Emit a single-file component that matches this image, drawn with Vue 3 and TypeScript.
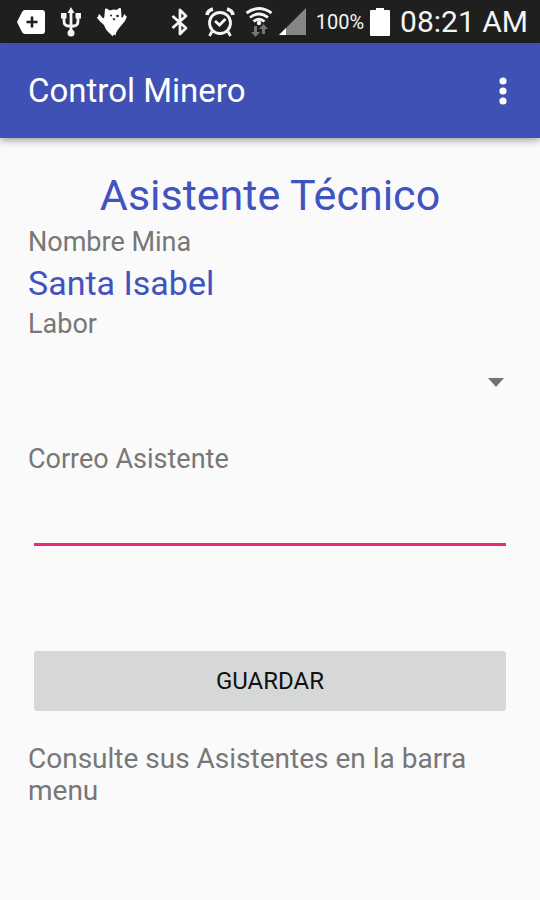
<script setup lang="ts">
import { ref } from 'vue'

const labor = ref('')
const correo = ref('')
const labores: string[] = []
</script>

<template>
  <div class="screen">
    <div class="status">
      <div class="notices">
        <svg width="28" height="26" viewBox="0 0 28 26" aria-hidden="true">
          <path d="M8 1h17q3 0 3 3v18q0 3-3 3H8q-2 0-3-2L0 13l5-10q1-2 3-2z" fill="#fff" />
          <path d="M15 7.500v11M9.500 13h11" stroke="#1f1f1f" stroke-width="2.600" />
        </svg>
        <svg width="20" height="30" viewBox="0 0 20 30" fill="none" stroke="#f4f4f4" stroke-width="2.800" aria-hidden="true">
          <path d="M10 5v20M3 10v4q0 4.500 4 5h6q4-.5 4-5v-4" />
          <path d="M10 0l3.500 6h-7z" fill="#f4f4f4" stroke="none" />
          <path d="M0 6h5.500v5.500H0zM14.500 6H20v5.500h-5.500z" fill="#f4f4f4" stroke="none" />
          <circle cx="10" cy="26" r="3.500" fill="#f4f4f4" stroke="none" />
        </svg>
        <svg width="30" height="30" viewBox="0 0 30 30" aria-hidden="true">
          <path d="M8 2.500Q8 1 9.500 1.500L13 3.500q4-1.500 6.500-.5L22.500 1q1.500-.5 1.500 1l.5 8q0 1.500 1.500 0l1-2.500q1-1 1 .5l1 1q1 0 .5 1.500l-1.500 3.500-5 6q-3 3.500-4 6l-.5 2.500-2-1-1 2-2-2.500Q9 24 7 18l-4-3.500-2.500-3Q-.5 10 1 9.800L1.500 8q.5-1.500 1.500-.3l2.500 3q1.500 1 1.800-.7z" fill="#fff" />
          <circle cx="14" cy="8.500" r="1" fill="#1f1f1f" />
          <circle cx="20.500" cy="9" r="1.300" fill="#1f1f1f" />
          <path d="M15.500 11l3 .5-1.500 2.500z" fill="#1f1f1f" />
        </svg>
      </div>
      <div class="system">
        <svg class="bluetooth" width="18" height="28" viewBox="0 0 18 28" fill="none" stroke="#f4f4f4" stroke-width="2.800" stroke-linejoin="round" aria-hidden="true">
          <path d="M1.500 8L15 20l-6 6V2l6 6L1.500 20" />
        </svg>
        <svg width="30" height="30" viewBox="0 0 30 30" fill="none" stroke="#f4f4f4" stroke-width="2.800" aria-hidden="true">
          <circle cx="15" cy="16" r="10.500" />
          <path d="M2 8q.5-4.500 6-6M28 8q-.5-4.500-6-6" stroke-width="3.600" />
          <path d="M10 14l4.500 4 6-6M7 24.500l-2.500 4.500M23 24.500l2.500 4.500" />
        </svg>
        <div class="network">
          <svg width="28" height="30" viewBox="0 0 28 30" fill="none" stroke="#f4f4f4" stroke-width="2.800" aria-hidden="true">
            <path d="M1.500 6q12.500-9 25 0M5 10.500q9-7 18 0M8.500 14.500q5.500-4.500 11 0" />
            <circle cx="14" cy="16" r="2.200" fill="#f4f4f4" stroke="none" />
            <path d="M9 19h3v6h3l-4.500 5L6 25h3zM17 27v-5h-3l4.500-5 4.500 5h-3v5z" fill="#757575" stroke="none" />
          </svg>
          <svg width="27" height="27" viewBox="0 0 27 27" aria-hidden="true">
            <path d="M27 0v27H0z" fill="#858585" />
            <path d="M7 20v7H0z" fill="#fff" />
          </svg>
        </div>
        <div class="power">
          <span class="percent">100%</span>
          <svg width="20" height="28" viewBox="0 0 20 28" aria-hidden="true">
            <path d="M6 0h8v2h5q1 0 1 1v24q0 1-1 1H1q-1 0-1-1V3q0-1 1-1h5z" fill="#fff" />
          </svg>
        </div>
        <span class="clock">08:21 AM</span>
      </div>
    </div>

    <header class="bar">
      <h1>Control Minero</h1>
      <button class="more" type="button" aria-label="Más opciones">
        <svg width="8" height="28" viewBox="0 0 8 28" fill="#fff" aria-hidden="true">
          <circle cx="4" cy="4" r="3.600" />
          <circle cx="4" cy="14" r="3.600" />
          <circle cx="4" cy="24" r="3.600" />
        </svg>
      </button>
    </header>

    <main>
      <h2>Asistente Técnico</h2>
      <p class="label">Nombre Mina</p>
      <p class="mine">Santa Isabel</p>
      <label class="label" for="labor">Labor</label>
      <div class="picker">
        <select id="labor" v-model="labor">
          <option v-for="item in labores" :key="item" :value="item">{{ item }}</option>
        </select>
        <svg width="16" height="9" viewBox="0 0 16 9" aria-hidden="true">
          <path d="M0 0h16L8 9z" fill="#737373" />
        </svg>
      </div>
      <label class="label" for="correo">Correo Asistente</label>
      <input id="correo" v-model="correo" type="email" />
      <button class="save" type="button">GUARDAR</button>
      <p class="hint">Consulte sus Asistentes en la barra menu</p>
    </main>
  </div>
</template>

<style>
body {
  margin: 0;
  background: #fafafa;
}
</style>

<style scoped>
.screen {
  min-height: 100vh;
  background: #fafafa;
  color: #777;
  font-family: Roboto, "Liberation Sans", sans-serif;
}

.status {
  display: flex;
  justify-content: space-between;
  align-items: center;
  box-sizing: border-box;
  height: 43px;
  padding: 0 12px 0 17px;
  background: #1f1f1f;
  color: #f4f4f4;
}

.notices,
.system,
.network,
.power {
  display: flex;
  align-items: center;
}

.notices {
  gap: 16px;
}

.system {
  gap: 10px;
}

.network,
.power {
  gap: 6px;
}

.bluetooth {
  margin-right: 6px;
}

.status svg {
  flex: none;
}

.percent {
  font-size: 20px;
}

.clock {
  font-size: 30px;
  line-height: 40px;
}

.bar {
  display: flex;
  justify-content: space-between;
  align-items: center;
  height: 95px;
  padding: 0 28px;
  background: #3f51b5;
  color: #fff;
  box-shadow: 0 2px 8px rgba(0, 0, 0, 0.4);
}

h1,
h2,
p {
  margin: 0;
  font-weight: 400;
}

h1 {
  font-size: 33px;
  line-height: 40px;
}

.more {
  display: flex;
  padding: 8px 5px;
  border: 0;
  background: none;
}

main {
  display: flex;
  flex-direction: column;
  padding: 29px 28px;
}

h2 {
  color: #4053bf;
  font-size: 43px;
  line-height: 56px;
  text-align: center;
}

.label {
  font-size: 27px;
  line-height: 38px;
}

.mine {
  color: #4053bf;
  font-size: 34px;
  line-height: 44px;
}

.picker {
  display: grid;
  align-items: center;
  height: 78px;
  margin-bottom: 19px;
}

.picker > * {
  grid-area: 1 / 1;
}

.picker svg {
  justify-self: end;
  margin-right: 8px;
  pointer-events: none;
}

select {
  width: 100%;
  height: 100%;
  padding: 0 32px 0 8px;
  border: 0;
  background: none;
  color: #212121;
  font: inherit;
  font-size: 27px;
  appearance: none;
}

input {
  height: 68px;
  box-sizing: border-box;
  margin: 0 6px;
  padding: 20px 0 8px;
  border: 0;
  border-bottom: 3px solid #f0287c;
  border-radius: 0;
  outline: 0;
  background: none;
  color: #212121;
  font: inherit;
  font-size: 27px;
}

.save {
  height: 60px;
  margin: 105px 6px 32px;
  border: 0;
  border-radius: 3px;
  background: #d6d7d7;
  color: #111;
  font: inherit;
  font-size: 24px;
}

.hint {
  font-size: 28px;
  line-height: 32px;
}
</style>
